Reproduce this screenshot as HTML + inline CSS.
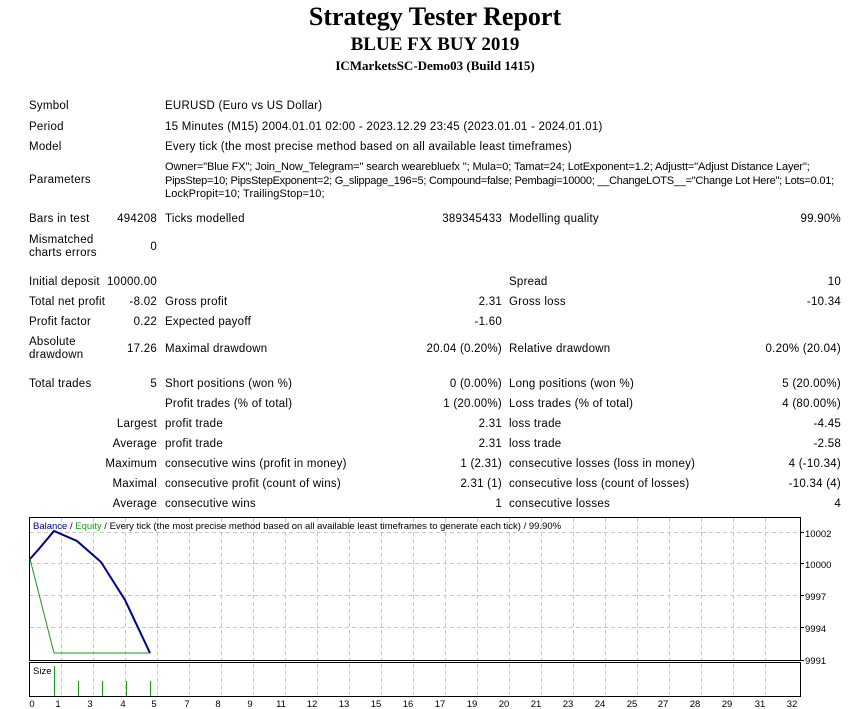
<!DOCTYPE html>
<html><head><meta charset="utf-8">
<style>
html,body{margin:0;padding:0;background:#fff;}
body{width:854px;height:709px;position:relative;overflow:hidden;font-family:"Liberation Sans",Tahoma,sans-serif;font-size:11.5px;letter-spacing:0.25px;color:#000;}
.t{position:absolute;white-space:nowrap;line-height:13px;margin-top:1px;}
.a{left:29px}.b{right:697px;text-align:right}.c{left:165px}.d{right:352px;text-align:right}.e{left:509px}.f{right:13px;text-align:right}
.p{font-size:11px;}
.h{position:absolute;left:0;width:870px;text-align:center;font-family:"Liberation Serif",serif;font-weight:bold;white-space:nowrap;letter-spacing:0;}
</style></head><body>
<div class="h" style="top:2px;font-size:26px;">Strategy Tester Report</div>
<div class="h" style="top:34px;font-size:19px;">BLUE FX BUY 2019</div>
<div class="h" style="top:58px;font-size:13px;">ICMarketsSC-Demo03 (Build 1415)</div>

<div class="t a" style="top:99px">Symbol</div><div class="t c" style="top:99px">EURUSD (Euro vs US Dollar)</div>
<div class="t a" style="top:120px">Period</div><div class="t c" style="top:120px">15 Minutes (M15) 2004.01.01 02:00 - 2023.12.29 23:45 (2023.01.01 - 2024.01.01)</div>
<div class="t a" style="top:140px">Model</div><div class="t c" style="top:140px">Every tick (the most precise method based on all available least timeframes)</div>
<div class="t a" style="top:173px">Parameters</div>
<div class="t c p" style="top:160px;letter-spacing:-0.1px">Owner="Blue FX"; Join_Now_Telegram=" search wearebluefx "; Mula=0; Tamat=24; LotExponent=1.2; Adjustt="Adjust Distance Layer";</div>
<div class="t c p" style="top:174px;letter-spacing:-0.25px">PipsStep=10; PipsStepExponent=2; G_slippage_196=5; Compound=false; Pembagi=10000; __ChangeLOTS__="Change Lot Here"; Lots=0.01;</div>
<div class="t c p" style="top:187px;letter-spacing:0.1px">LockPropit=10; TrailingStop=10;</div>

<div class="t a" style="top:212px">Bars in test</div><div class="t b" style="top:212px">494208</div><div class="t c" style="top:212px">Ticks modelled</div><div class="t d" style="top:212px">389345433</div><div class="t e" style="top:212px">Modelling quality</div><div class="t f" style="top:212px">99.90%</div>
<div class="t a" style="top:233px">Mismatched</div><div class="t a" style="top:246px">charts errors</div><div class="t b" style="top:240px">0</div>

<div class="t a" style="top:275px">Initial deposit</div><div class="t b" style="top:275px">10000.00</div><div class="t e" style="top:275px">Spread</div><div class="t f" style="top:275px">10</div>
<div class="t a" style="top:295px">Total net profit</div><div class="t b" style="top:295px">-8.02</div><div class="t c" style="top:295px">Gross profit</div><div class="t d" style="top:295px">2.31</div><div class="t e" style="top:295px">Gross loss</div><div class="t f" style="top:295px">-10.34</div>
<div class="t a" style="top:315px">Profit factor</div><div class="t b" style="top:315px">0.22</div><div class="t c" style="top:315px">Expected payoff</div><div class="t d" style="top:315px">-1.60</div>
<div class="t a" style="top:335px">Absolute</div><div class="t a" style="top:348px">drawdown</div><div class="t b" style="top:342px">17.26</div><div class="t c" style="top:342px">Maximal drawdown</div><div class="t d" style="top:342px">20.04 (0.20%)</div><div class="t e" style="top:342px">Relative drawdown</div><div class="t f" style="top:342px">0.20% (20.04)</div>

<div class="t a" style="top:377px">Total trades</div><div class="t b" style="top:377px">5</div><div class="t c" style="top:377px">Short positions (won %)</div><div class="t d" style="top:377px">0 (0.00%)</div><div class="t e" style="top:377px">Long positions (won %)</div><div class="t f" style="top:377px">5 (20.00%)</div>
<div class="t c" style="top:397px">Profit trades (% of total)</div><div class="t d" style="top:397px">1 (20.00%)</div><div class="t e" style="top:397px">Loss trades (% of total)</div><div class="t f" style="top:397px">4 (80.00%)</div>
<div class="t b" style="top:417px">Largest</div><div class="t c" style="top:417px">profit trade</div><div class="t d" style="top:417px">2.31</div><div class="t e" style="top:417px">loss trade</div><div class="t f" style="top:417px">-4.45</div>
<div class="t b" style="top:437px">Average</div><div class="t c" style="top:437px">profit trade</div><div class="t d" style="top:437px">2.31</div><div class="t e" style="top:437px">loss trade</div><div class="t f" style="top:437px">-2.58</div>
<div class="t b" style="top:457px">Maximum</div><div class="t c" style="top:457px">consecutive wins (profit in money)</div><div class="t d" style="top:457px">1 (2.31)</div><div class="t e" style="top:457px">consecutive losses (loss in money)</div><div class="t f" style="top:457px">4 (-10.34)</div>
<div class="t b" style="top:477px">Maximal</div><div class="t c" style="top:477px">consecutive profit (count of wins)</div><div class="t d" style="top:477px">2.31 (1)</div><div class="t e" style="top:477px">consecutive loss (count of losses)</div><div class="t f" style="top:477px">-10.34 (4)</div>
<div class="t b" style="top:497px">Average</div><div class="t c" style="top:497px">consecutive wins</div><div class="t d" style="top:497px">1</div><div class="t e" style="top:497px">consecutive losses</div><div class="t f" style="top:497px">4</div>

<svg style="position:absolute;left:0;top:0;letter-spacing:0" width="854" height="709" font-family="Liberation Sans, Tahoma, sans-serif">
<g stroke="#c8c8c8" stroke-width="1" stroke-dasharray="4,3">
<path d="M61.5 518V660M93.5 518V660M125.5 518V660M157.5 518V660M189.5 518V660M221.5 518V660M253.5 518V660M285.5 518V660M317.5 518V660M349.5 518V660M381.5 518V660M413.5 518V660M445.5 518V660M477.5 518V660M509.5 518V660M541.5 518V660M573.5 518V660M605.5 518V660M637.5 518V660M669.5 518V660M701.5 518V660M733.5 518V660M765.5 518V660"/>
<path d="M61.5 664V695M93.5 664V695M125.5 664V695M157.5 664V695M189.5 664V695M221.5 664V695M253.5 664V695M285.5 664V695M317.5 664V695M349.5 664V695M381.5 664V695M413.5 664V695M445.5 664V695M477.5 664V695M509.5 664V695M541.5 664V695M573.5 664V695M605.5 664V695M637.5 664V695M669.5 664V695M701.5 664V695M733.5 664V695M765.5 664V695"/>
<path d="M30 532.5H800M30 563.5H800M30 595.5H800M30 627.5H800"/>
</g>
<rect x="29.5" y="517.5" width="771" height="143" fill="none" stroke="#000"/>
<rect x="29.5" y="662.5" width="771" height="34" fill="none" stroke="#000"/>
<g stroke="#000"><path d="M800 532.5h4M800 563.5h4M800 595.5h4M800 627.5h4M800 660.5h4"/></g>
<polyline points="30,559 54,653 150,653" fill="none" stroke="#1a9a1a" stroke-width="1"/>
<polyline points="30,559 38,550 54,531 77,541 101,562 125,600 150,653" fill="none" stroke="#00008b" stroke-width="2"/>
<g stroke="#1a9a1a"><path d="M54.5 666V696M78.5 681V696M102.5 681V696M126.5 681V696M150.5 681V696"/></g>
<text x="33" y="529" font-size="9.5"><tspan fill="#00008b">Balance</tspan> / <tspan fill="#1a9a1a">Equity</tspan> / Every tick (the most precise method based on all available least timeframes to generate each tick) / 99.90%</text>
<text x="33" y="674" font-size="9.5">Size</text>
<g font-size="9.5"><text x="805" y="537">10002</text><text x="805" y="568">10000</text><text x="805" y="600">9997</text><text x="805" y="632">9994</text><text x="805" y="664">9991</text></g>
<g font-size="9.5" text-anchor="middle">
<text x="32" y="707">0</text><text x="58" y="707">1</text><text x="90" y="707">3</text><text x="123" y="707">4</text><text x="154" y="707">5</text><text x="187" y="707">7</text><text x="218" y="707">8</text><text x="250" y="707">9</text><text x="281" y="707">11</text><text x="312" y="707">12</text><text x="344" y="707">13</text><text x="376" y="707">15</text><text x="408" y="707">16</text><text x="440" y="707">17</text><text x="472" y="707">19</text><text x="504" y="707">20</text><text x="536" y="707">21</text><text x="568" y="707">23</text><text x="600" y="707">24</text><text x="632" y="707">25</text><text x="663" y="707">27</text><text x="695" y="707">28</text><text x="727" y="707">29</text><text x="760" y="707">31</text><text x="792" y="707">32</text>
</g>
</svg>
</body></html>
